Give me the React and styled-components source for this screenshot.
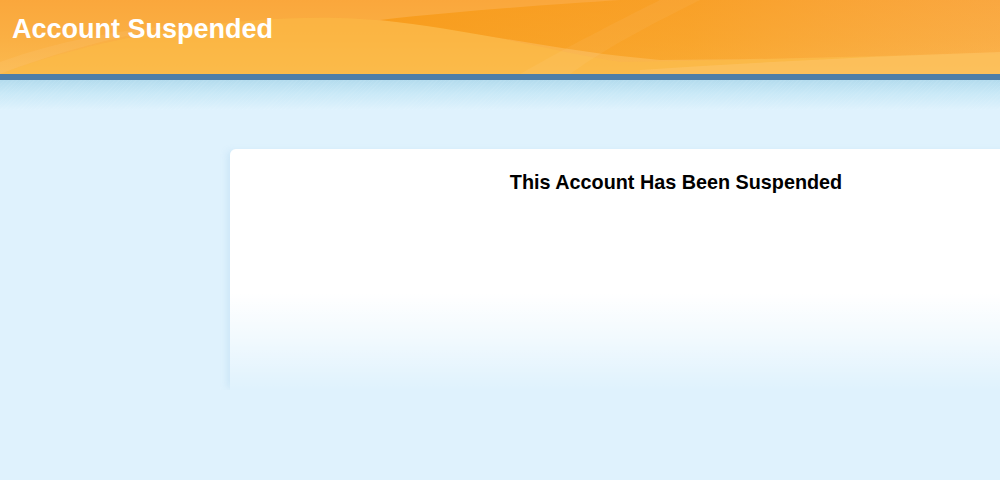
import React from "react";
import styled, { createGlobalStyle } from "styled-components";

const Global = createGlobalStyle`
  html, body {
    margin: 0;
    padding: 0;
    background: #dff2fd;
    font-family: "Liberation Sans", Arial, sans-serif;
    overflow: hidden;
  }
`;

const Page = styled.div`
  display: flex;
  flex-direction: column;
  min-height: 480px;
  background: #dff2fd;
`;

const Header = styled.header`
  position: relative;
  height: 74px;
  overflow: hidden;
  background: linear-gradient(180deg, #faa73c 0%, #fab044 55%, #fbba50 100%);
`;

const Waves = styled.svg`
  position: absolute;
  inset: 0;
  width: 100%;
  height: 100%;
`;

const Title = styled.h1`
  position: relative;
  margin: 0;
  padding: 14px 0 0 12px;
  font-size: 27px;
  font-weight: bold;
  color: #ffffff;
  line-height: normal;
`;

const Stripe = styled.div`
  height: 6px;
  background: #4e7ea8;
`;

const Shade = styled.div`
  height: 30px;
  background:
    repeating-linear-gradient(135deg, rgba(255,255,255,0.06) 0 1px, rgba(255,255,255,0) 1px 3px),
    linear-gradient(180deg, #b4dcee 0%, #c9e9f7 45%, #dff2fd 100%);
`;

const Main = styled.main`
  display: flex;
  padding: 39px 0 0 230px;
  overflow: hidden;
`;

const Card = styled.section`
  flex: 0 0 892px;
  height: 241px;
  box-sizing: border-box;
  padding-top: 22px;
  border-radius: 6px 6px 0 0;
  background: linear-gradient(180deg, #ffffff 0%, #ffffff 60%, rgba(255,255,255,0.55) 80%, rgba(255,255,255,0) 100%);
  box-shadow: -5px 0 6px -2px rgba(150, 200, 230, 0.25);
`;

const Heading = styled.h2`
  margin: 0;
  text-align: center;
  font-size: 19.8px;
  font-weight: bold;
  line-height: normal;
  color: #000000;
`;

export default function App() {
  return (
    <Page>
      <Global />
      <Header>
        <Waves viewBox="0 0 1000 74" preserveAspectRatio="none">
          <defs>
            <linearGradient id="dk" x1="0" y1="0" x2="1" y2="0">
              <stop offset="0" stopColor="#f7970f" stopOpacity="0.7" />
              <stop offset="0.5" stopColor="#f7970f" stopOpacity="0.45" />
              <stop offset="1" stopColor="#f9a84a" stopOpacity="0.3" />
            </linearGradient>
          </defs>
          <path d="M0 74 C90 40 220 15 340 18 C450 22 520 45 620 62 C750 60 880 56 1000 54 V74 Z" fill="#fcbc46" opacity="0.55" />
          <path d="M620 0 H1000 V52 C880 56 760 60 660 60 C560 52 470 30 380 20 C470 10 560 4 620 0 Z" fill="url(#dk)" />
          <path d="M520 74 C580 40 630 15 660 0 L700 0 C660 20 610 45 570 74 Z" fill="#ffffff" opacity="0.05" />
          <path d="M640 70 C760 62 880 56 1000 52 V74 H640 Z" fill="#fdc46a" opacity="0.55" />
          <path d="M0 62 C60 40 120 30 180 25 C100 40 50 55 0 74 Z" fill="#ffffff" opacity="0.06" />
        </Waves>
        <Title>Account Suspended</Title>
      </Header>
      <Stripe />
      <Shade />
      <Main>
        <Card>
          <Heading>This Account Has Been Suspended</Heading>
        </Card>
      </Main>
    </Page>
  );
}
